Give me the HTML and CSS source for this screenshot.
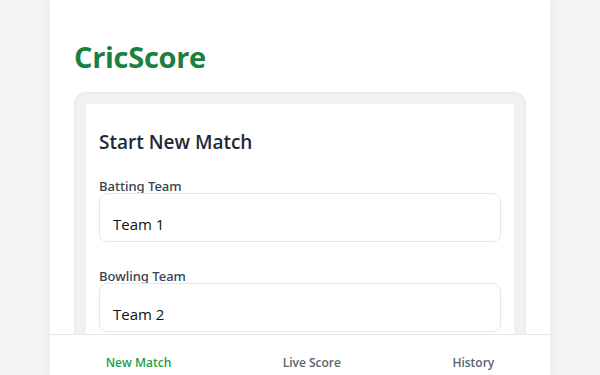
FILE: index.html
```html
<!DOCTYPE html>
<html>
<head>
<meta charset="utf-8">
<link rel="stylesheet" href="styles.css">
</head>
<body>
<div class="app">
  <header class="header">
    <h1 class="brand">CricScore</h1>
  </header>
  <main class="frame">
    <section class="panel">
      <h2 class="panel-title">Start New Match</h2>
      <div class="field">
        <label class="field-label">Batting Team</label>
        <div class="field-input">Team 1</div>
      </div>
      <div class="field">
        <label class="field-label">Bowling Team</label>
        <div class="field-input">Team 2</div>
      </div>
    </section>
  </main>
  <nav class="tabbar">
    <span class="tab tab-active">New Match</span>
    <span class="tab">Live Score</span>
    <span class="tab">History</span>
  </nav>
</div>
</body>
</html>
```
FILE: styles.css
```css
html, body {
  margin: 0;
  padding: 0;
  height: 100%;
  overflow: hidden;
}
body {
  background: #f3f4f6;
  font-family: "Open Sans", "Noto Sans", sans-serif;
  color: #1f2937;
}
.app {
  width: 500px;
  height: 100%;
  margin: 0 auto;
  background: #ffffff;
  box-shadow: 0 0 12px rgba(0, 0, 0, 0.06);
  box-sizing: border-box;
  padding: 0 24px;
  overflow: hidden;
}
.header {
  padding-top: 37px;
}
.brand {
  margin: 0;
  font-size: 29px;
  font-weight: 700;
  line-height: 40px;
  color: #1a7f3f;
  letter-spacing: -0.3px;
}
.frame {
  margin-top: 15px;
  background: #f1f1f1;
  border: 1px solid #e8e8e8;
  border-radius: 12px;
  padding: 11px 11px 0 11px;
}
.panel {
  background: #ffffff;
  padding: 22px 13px 40px 13px;
}
.panel-title {
  margin: 0 0 21px 0;
  font-size: 19px;
  font-weight: 600;
  line-height: 32px;
  color: #1f2937;
}
.field {
  display: flex;
  flex-direction: column;
  margin-bottom: 27px;
}
.field-label {
  font-family: "Noto Sans", "Open Sans", sans-serif;
  font-size: 13px;
  font-weight: 500;
  color: #374151;
  line-height: 14px;
}
.field-input {
  margin-top: 0;
  height: 49px;
  box-sizing: border-box;
  border: 1px solid #e5e7eb;
  border-radius: 8px;
  padding: 20px 13px 0 13px;
  font-size: 15px;
  color: #111111;
  line-height: 20px;
}
.tabbar {
  position: fixed;
  bottom: 0;
  left: 50%;
  transform: translateX(-50%);
  width: 500px;
  height: 41px;
  background: #ffffff;
  border-top: 1px solid #e5e7eb;
  display: flex;
  justify-content: space-around;
  align-items: center;
  padding-top: 14px;
  box-sizing: border-box;
}
.tab {
  font-size: 12px;
  font-weight: 600;
  color: #5b6270;
}
.tab-active {
  color: #22a04b;
}
```
